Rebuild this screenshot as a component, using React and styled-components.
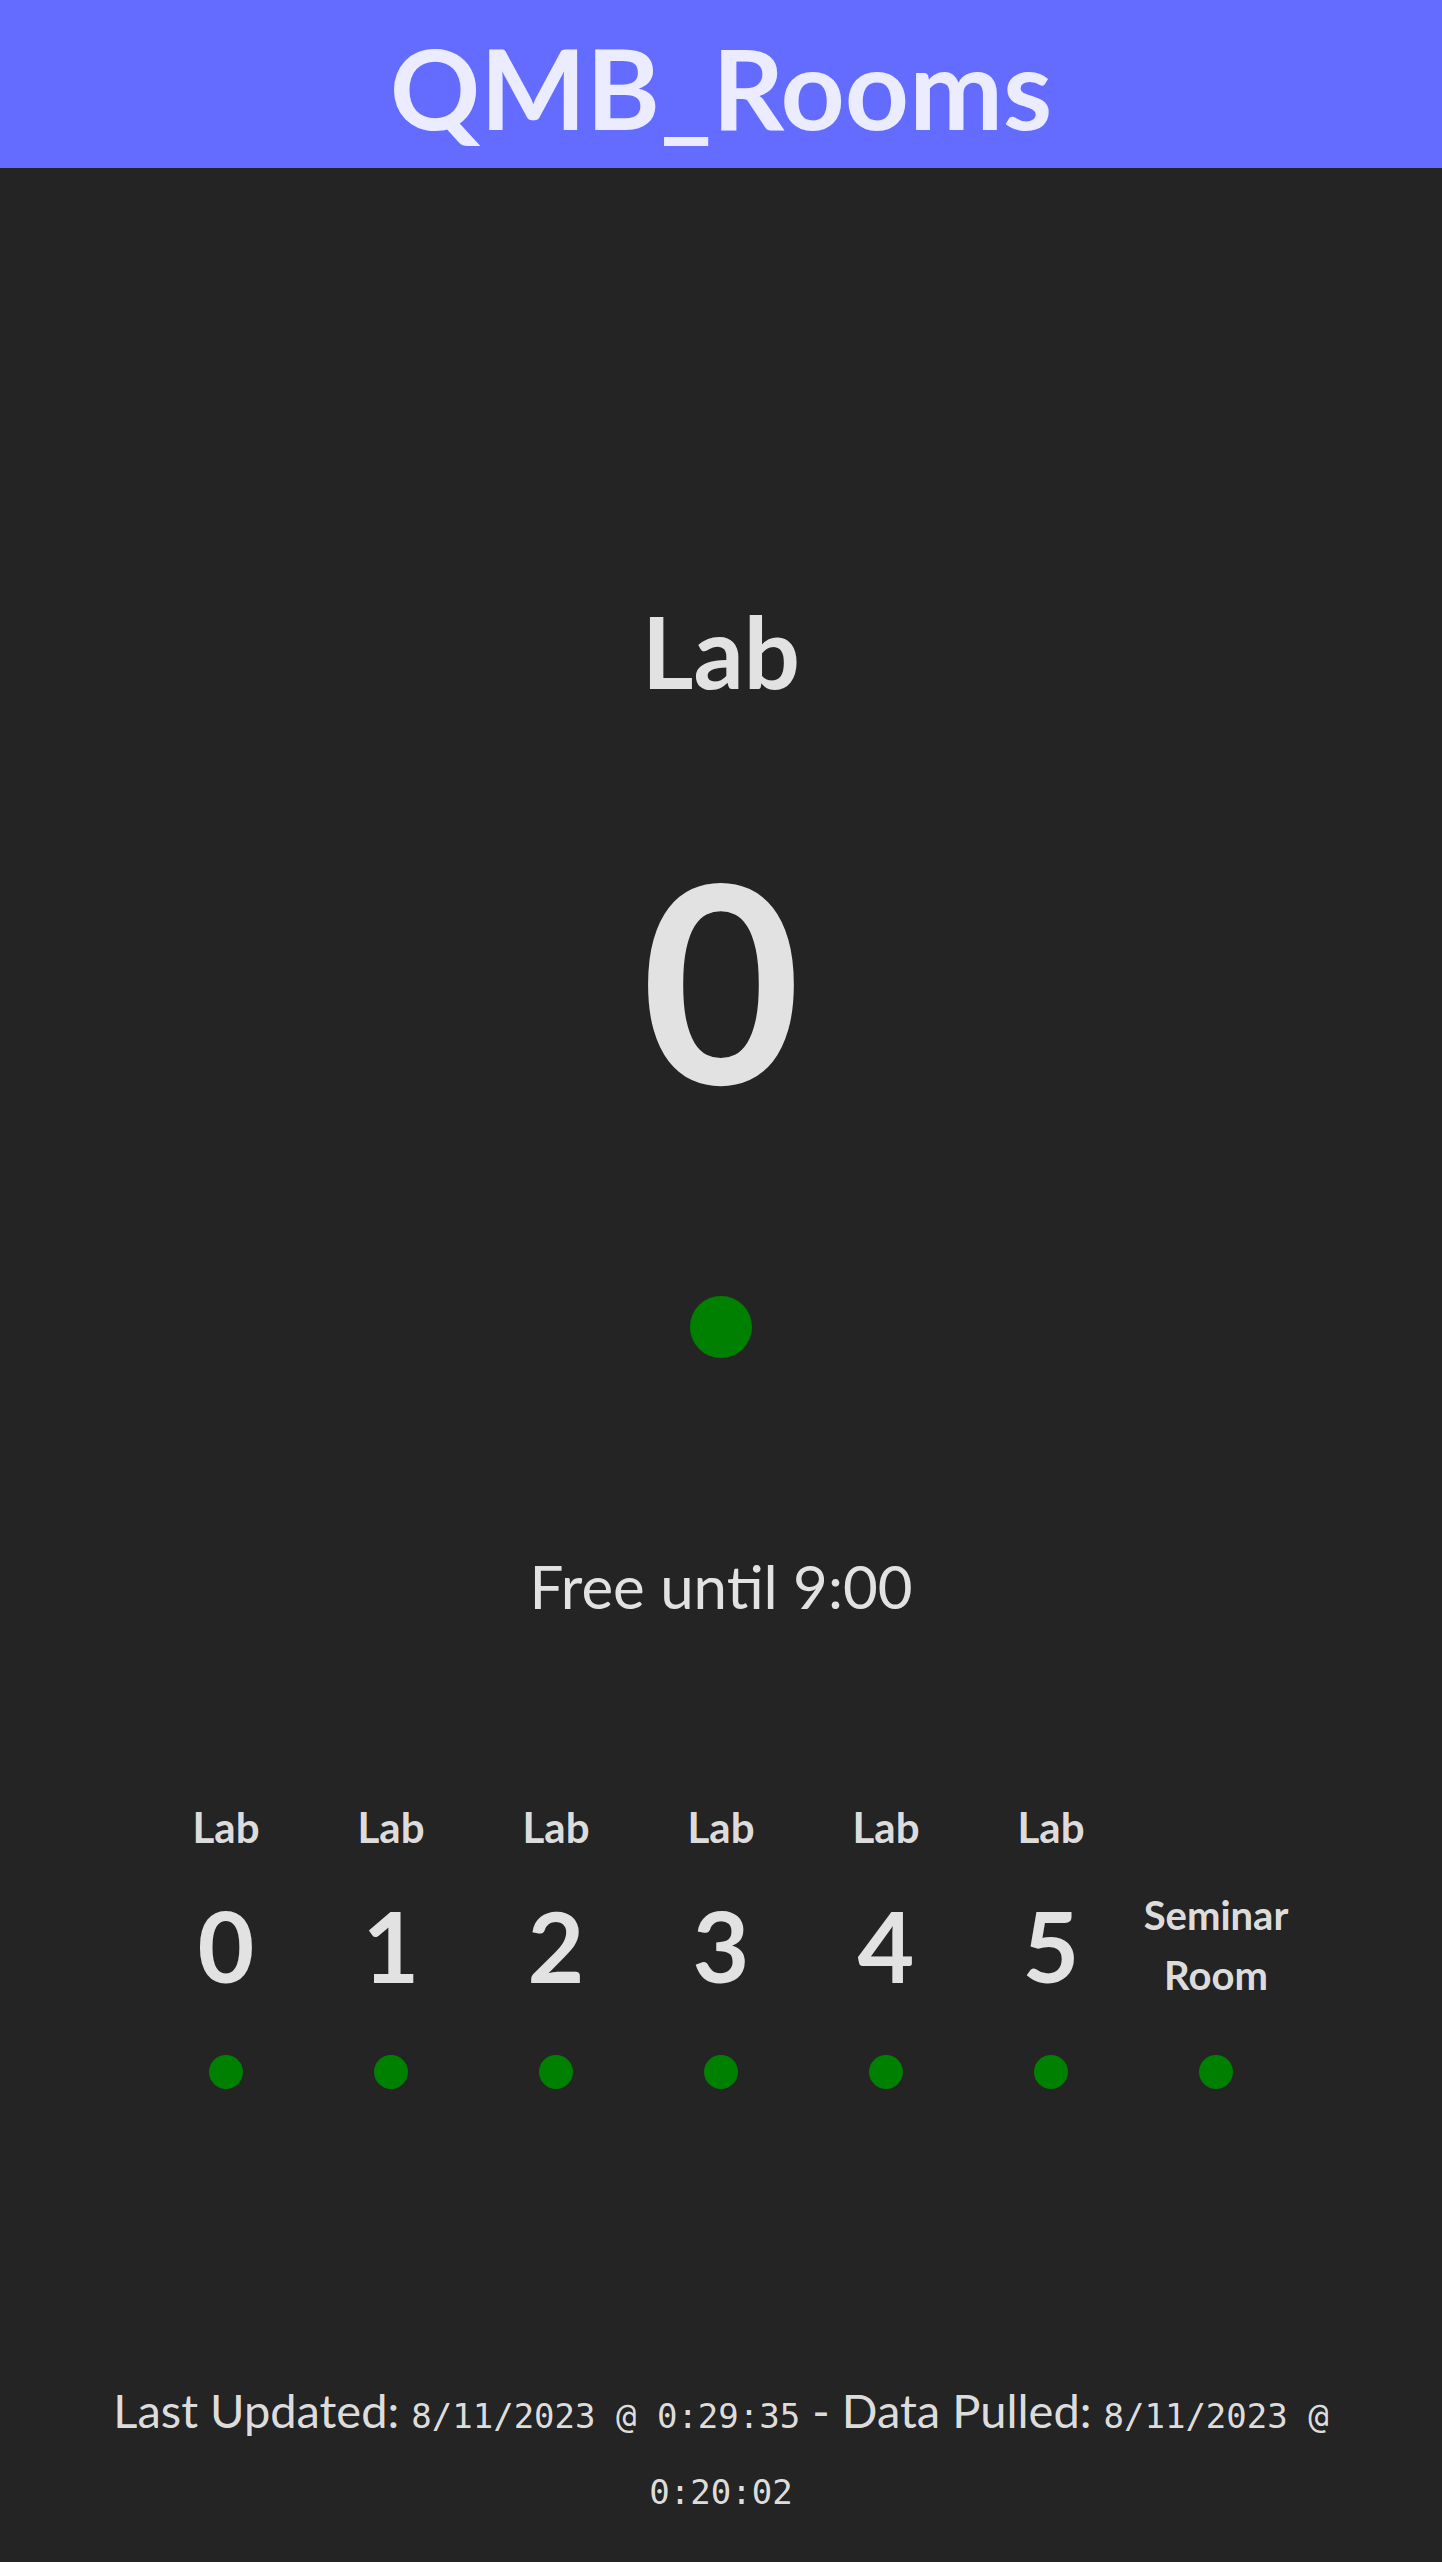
import styled, { createGlobalStyle } from "styled-components";

const GlobalStyle = createGlobalStyle`
    html, body {
        margin: 0;
        padding: 0;
        background: #242424;
    }
    body {
        font-family: Lato, "Open Sans", sans-serif;
        color: rgba(255, 255, 255, 0.87);
    }
`;

const Page = styled.div`
    min-height: 2562px;
    display: flex;
    flex-direction: column;
    align-items: stretch;
`;

const Header = styled.header`
    box-sizing: border-box;
    height: 168px;
    padding-top: 31px;
    background: #646cff;
    display: flex;
    justify-content: center;
    align-items: flex-start;
`;

const Title = styled.h1`
    margin: 0;
    font-size: 112px;
    line-height: 1;
    font-weight: 700;
`;

const Main = styled.main`
    display: flex;
    flex-direction: column;
    align-items: center;
`;

const RoomName = styled.div`
    margin-top: 433px;
    font-size: 99px;
    line-height: 1;
    font-weight: 700;
`;

const RoomNumber = styled.div`
    margin-top: 141px;
    font-size: 275px;
    line-height: 1;
    font-weight: 700;
`;

const Dot = styled.span`
    display: block;
    width: ${(p) => p.$size}px;
    height: ${(p) => p.$size}px;
    border-radius: 50%;
    background: ${(p) => (p.$busy ? "#c00000" : "green")};
`;

const BigDot = styled(Dot)`
    margin-top: 180px;
`;

const Status = styled.div`
    margin-top: 198px;
    font-size: 60px;
    line-height: 1;
    font-weight: 400;
`;

const Grid = styled.div`
    margin-top: 190px;
    display: grid;
    grid-template-columns: repeat(7, 165px);
`;

const Cell = styled.div`
    display: flex;
    flex-direction: column;
    align-items: center;
`;

const CellLabel = styled.div`
    height: 42px;
    font-size: 42px;
    line-height: 1;
    font-weight: 700;
`;

const CellMain = styled.div`
    margin-top: 37px;
    height: 120px;
    display: flex;
    align-items: center;
    justify-content: center;
    text-align: center;
    font-weight: 700;
    font-size: ${(p) => (p.$small ? "40px" : "98px")};
    line-height: ${(p) => (p.$small ? "60px" : "1")};
`;

const SmallDot = styled(Dot)`
    margin-top: 50px;
`;

const Footer = styled.footer`
    margin: 283px auto 0;
    max-width: 1290px;
    text-align: center;
    font-size: 47px;
    line-height: 76px;
`;

const Words = styled.span`
    line-height: 1;
`;

const Stamp = styled.code`
    font-family: "DejaVu Sans Mono", "Liberation Mono", monospace;
    font-size: 34px;
    line-height: 1;
`;

const rooms = [
    { label: "Lab", main: "0" },
    { label: "Lab", main: "1" },
    { label: "Lab", main: "2" },
    { label: "Lab", main: "3" },
    { label: "Lab", main: "4" },
    { label: "Lab", main: "5" },
    { label: "", main: "Seminar Room", small: true },
];

export default function App() {
    return (
        <Page>
            <GlobalStyle />
            <Header>
                <Title>QMB_Rooms</Title>
            </Header>
            <Main>
                <RoomName>Lab</RoomName>
                <RoomNumber>0</RoomNumber>
                <BigDot $size={62} />
                <Status>Free until 9:00</Status>
                <Grid>
                    {rooms.map((r, i) => (
                        <Cell key={i}>
                            <CellLabel>{r.label}</CellLabel>
                            <CellMain $small={r.small}>{r.main}</CellMain>
                            <SmallDot $size={34} />
                        </Cell>
                    ))}
                </Grid>
            </Main>
            <Footer>
                <Words>Last Updated: </Words>
                <Stamp>8/11/2023 @ 0:29:35</Stamp>
                <Words> - Data Pulled: </Words>
                <Stamp>8/11/2023 @</Stamp> <Stamp>0:20:02</Stamp>
            </Footer>
        </Page>
    );
}
